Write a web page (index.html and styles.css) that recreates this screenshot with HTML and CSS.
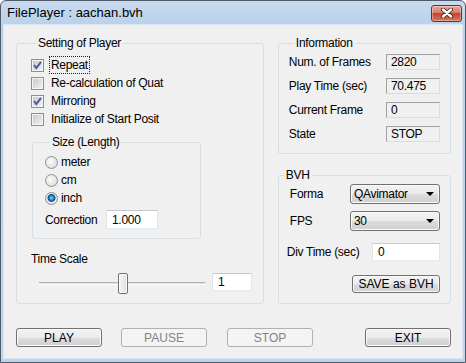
FILE: index.html
```html
<!DOCTYPE html>
<html lang="en">
<head>
    <meta charset="UTF-8">
    <title>FilePlayer : aachan.bvh</title>
    <link rel="stylesheet" href="styles.css">
</head>
<body>
    <div class="window">
        <div class="titlebar">
            <span class="title">FilePlayer : aachan.bvh</span>
            <span class="close">
                <svg width="14" height="10" viewBox="0 0 14 10">
                    <path d="M3 1.5 L11 8.5 M11 1.5 L3 8.5" stroke="#5a2218" stroke-width="4.2" stroke-linecap="round"/>
                    <path d="M3 1.5 L11 8.5 M11 1.5 L3 8.5" stroke="#fff" stroke-width="2.4" stroke-linecap="round"/>
                </svg>
            </span>
        </div>

        <div class="client">
            <div class="columns">
                <div class="group player">
                    <div class="group-title">Setting of Player</div>
                    <div class="checks">
                        <div class="check">
                            <span class="cb"><svg width="11" height="11" viewBox="0 0 11 11"><path d="M2 5 L4.3 8 L9 1.8" stroke="#4a5f97" stroke-width="2" fill="none"/></svg></span>
                            <span class="text"><span class="focus">Repeat</span></span>
                        </div>
                        <div class="check">
                            <span class="cb"></span>
                            <span class="text">Re-calculation of Quat</span>
                        </div>
                        <div class="check">
                            <span class="cb"><svg width="11" height="11" viewBox="0 0 11 11"><path d="M2 5 L4.3 8 L9 1.8" stroke="#4a5f97" stroke-width="2" fill="none"/></svg></span>
                            <span class="text">Mirroring</span>
                        </div>
                        <div class="check">
                            <span class="cb"></span>
                            <span class="text">Initialize of Start Posit</span>
                        </div>
                    </div>

                    <div class="group size">
                        <div class="group-title">Size (Length)</div>
                        <div class="radios">
                            <div class="radio"><span class="rb"></span>meter</div>
                            <div class="radio"><span class="rb"></span>cm</div>
                            <div class="radio"><span class="rb on"></span>inch</div>
                        </div>
                        <div class="correction">
                            <span class="correction-label">Correction</span>
                            <span class="edit correction-edit">1.000</span>
                        </div>
                    </div>

                    <div class="time-label">Time Scale</div>
                    <div class="slider-row">
                        <div class="slider"><span class="thumb"></span></div>
                        <span class="edit scale-edit">1</span>
                    </div>
                </div>

                <div class="side">
                    <div class="group info">
                        <div class="group-title">Information</div>
                        <div class="info-rows">
                            <div class="info-row"><span>Num. of Frames</span><span class="field">2820</span></div>
                            <div class="info-row"><span>Play Time (sec)</span><span class="field">70.475</span></div>
                            <div class="info-row"><span>Current Frame</span><span class="field">0</span></div>
                            <div class="info-row"><span>State</span><span class="field">STOP</span></div>
                        </div>
                    </div>

                    <div class="group bvh">
                        <div class="group-title">BVH</div>
                        <div class="bvh-row first">
                            <span class="bvh-label">Forma</span>
                            <span class="combo">QAvimator<span class="arrow"></span></span>
                        </div>
                        <div class="bvh-row second">
                            <span class="bvh-label">FPS</span>
                            <span class="combo">30<span class="arrow"></span></span>
                        </div>
                        <div class="div-row">
                            <span>Div Time (sec)</span>
                            <span class="edit div-edit">0</span>
                        </div>
                        <div class="save-row">
                            <button class="btn save">SAVE as BVH</button>
                        </div>
                    </div>
                </div>
            </div>

            <div class="buttons">
                <button class="btn">PLAY</button>
                <button class="btn pause" disabled>PAUSE</button>
                <button class="btn stop" disabled>STOP</button>
                <button class="btn exit">EXIT</button>
            </div>
        </div>
    </div>
</body>
</html>
```

FILE: styles.css
```css
* {
    box-sizing: border-box;
}

body {
    margin: 0;
    font-family: "Liberation Sans", Arial, sans-serif;
    font-size: 12px;
    line-height: 14px;
    letter-spacing: -0.3px;
    color: #000;
}

.window {
    width: 466px;
    height: 363px;
    border: 1px solid #4e5c6c;
    border-radius: 6px 6px 0 0;
    background: linear-gradient(#c9daee, #b9d1ea 24px, #bdd4ec);
    display: flex;
    flex-direction: column;
}

.titlebar {
    height: 24px;
    display: flex;
    align-items: center;
    padding: 0 3px 0 6px;
}

.title {
    font-size: 13px;
    letter-spacing: 0;
}

.close {
    margin-left: auto;
    width: 31px;
    height: 17px;
    border: 1px solid #6e2c22;
    border-radius: 3px;
    background: linear-gradient(#e9ab9b, #d67f69 45%, #c5462c 50%, #d3775c);
    box-shadow: inset 0 0 0 1px rgba(255, 255, 255, 0.35);
    display: flex;
    align-items: center;
    justify-content: center;
}

.client {
    flex: 1;
    margin: 0 3px 4px 3px;
    background: #f0f0f0;
    box-shadow: 0 0 0 1px #dce7f3;
    padding: 18px 11px 0 12px;
}

.columns {
    display: flex;
    gap: 14px;
    align-items: flex-start;
}

.group {
    border: 1px solid #d5dfe5;
    border-radius: 3px;
}

.group-title {
    display: table;
    margin: -8px 0 0 5px;
    padding: 0 2px;
    background: #f0f0f0;
}

/* Setting of Player */
.player {
    width: 249px;
    height: 261px;
    padding-left: 14px;
}

.checks {
    margin-top: 6px;
}

.check {
    display: flex;
    align-items: center;
    height: 18px;
    gap: 7px;
}

.check .text {
    white-space: nowrap;
}

.focus {
    outline: 1px dotted #222;
    outline-offset: 1px;
}

.cb {
    flex: none;
    width: 13px;
    height: 13px;
    border: 1px solid #8e8f8f;
    background: linear-gradient(135deg, #c3c6cb, #f4f4f4);
    box-shadow: inset 0 0 0 1px #f4f4f4;
    display: flex;
}

.size {
    width: 169px;
    height: 97px;
    margin: 14px 0 0 1px;
    padding-left: 12px;
}

.radios {
    margin-top: 4px;
}

.radio {
    display: flex;
    align-items: center;
    height: 18px;
    gap: 3px;
}

.rb {
    width: 13px;
    height: 13px;
    border-radius: 50%;
    border: 1px solid #8e8f8f;
    background: radial-gradient(circle at 40% 40%, #fdfdfd, #d2d2d2);
}

.rb.on {
    background: radial-gradient(circle at 50% 45%, #9ee0ff 0, #2a86cf 2px, #0d4f8c 3.5px, #f4f4f4 4.5px, #dcdcdc 6px);
}

.correction {
    display: flex;
    align-items: center;
    margin-top: 3px;
}

.correction-label {
    width: 61px;
}

.edit {
    display: flex;
    align-items: center;
    height: 19px;
    border: 1px solid;
    border-color: #c5c8ce #e2e5ea #e6ebf0 #e2e3ea;
    background: #fff;
    padding: 0 5px;
}

.correction-edit {
    width: 52px;
}

.time-label {
    margin-top: 13px;
}

.slider-row {
    display: flex;
    align-items: flex-start;
    margin-top: 7px;
}

.slider {
    width: 166px;
    height: 21px;
    margin-left: 8px;
    display: flex;
    background: linear-gradient(transparent 9px, #b3b3b3 9px, #b3b3b3 10px, #e2e2e2 10px, #e2e2e2 11px, #fff 11px, #fff 12px, transparent 12px);
}

.thumb {
    width: 10px;
    height: 21px;
    margin-left: 79px;
    border: 1px solid #707070;
    border-radius: 2px;
    background: linear-gradient(to right, #f6f6f6, #dedede);
    box-shadow: inset 0 0 0 1px #fbfbfb;
}

.scale-edit {
    width: 40px;
    height: 18px;
    margin-left: 7px;
}

/* Information */
.side {
    width: 174px;
    display: flex;
    flex-direction: column;
    gap: 21px;
}

.info {
    height: 111px;
    padding: 0 10px;
}

.info-rows {
    margin-top: 4px;
    display: flex;
    flex-direction: column;
    gap: 8px;
}

.info-row {
    display: flex;
    align-items: center;
    justify-content: space-between;
    height: 16px;
}

.field {
    width: 54px;
    height: 16px;
    border: 1px solid;
    border-color: #a0a0a0 #dcdcdc #dcdcdc #a0a0a0;
    padding-left: 4px;
    display: flex;
    align-items: center;
}

/* BVH */
.bvh {
    height: 129px;
    padding-right: 10px;
}

.bvh-row {
    display: flex;
    align-items: center;
    padding-left: 11px;
    height: 20px;
}

.bvh-row.first {
    margin-top: 2px;
}

.bvh-row.second {
    margin-top: 7px;
}

.bvh-label {
    white-space: nowrap;
}

.combo {
    margin-left: auto;
    width: 90px;
    height: 20px;
    border: 1px solid #707070;
    border-radius: 3px;
    background: linear-gradient(#f2f2f2, #ebebeb 50%, #dddddd 50%, #cfcfcf);
    box-shadow: inset 0 0 0 1px #fbfbfb;
    padding-left: 3px;
    display: flex;
    align-items: center;
}

.arrow {
    margin-left: auto;
    margin-right: 5px;
    border-top: 4px solid #000;
    border-left: 4px solid transparent;
    border-right: 4px solid transparent;
}

.div-row {
    display: flex;
    align-items: center;
    padding-left: 8px;
    margin-top: 12px;
}

.div-edit {
    margin-left: auto;
    width: 68px;
    height: 18px;
}

.save-row {
    display: flex;
    justify-content: flex-end;
    margin-top: 14px;
}

/* Buttons */
.btn {
    width: 86px;
    height: 19px;
    padding: 0;
    border: 1px solid #707070;
    border-radius: 3px;
    background: linear-gradient(#f2f2f2, #ebebeb 50%, #dddddd 50%, #cfcfcf);
    box-shadow: inset 0 0 0 1px #fbfbfb;
    font: inherit;
    color: #000;
}

.btn:disabled {
    border-color: #adb2b5;
    background: #f4f4f4;
    box-shadow: none;
    color: #838383;
}

.save {
    width: 88px;
    height: 18px;
}

.buttons {
    display: flex;
    margin-top: 24px;
}

.pause {
    margin-left: 19px;
}

.stop {
    margin-left: 20px;
}

.exit {
    margin-left: auto;
}
```
